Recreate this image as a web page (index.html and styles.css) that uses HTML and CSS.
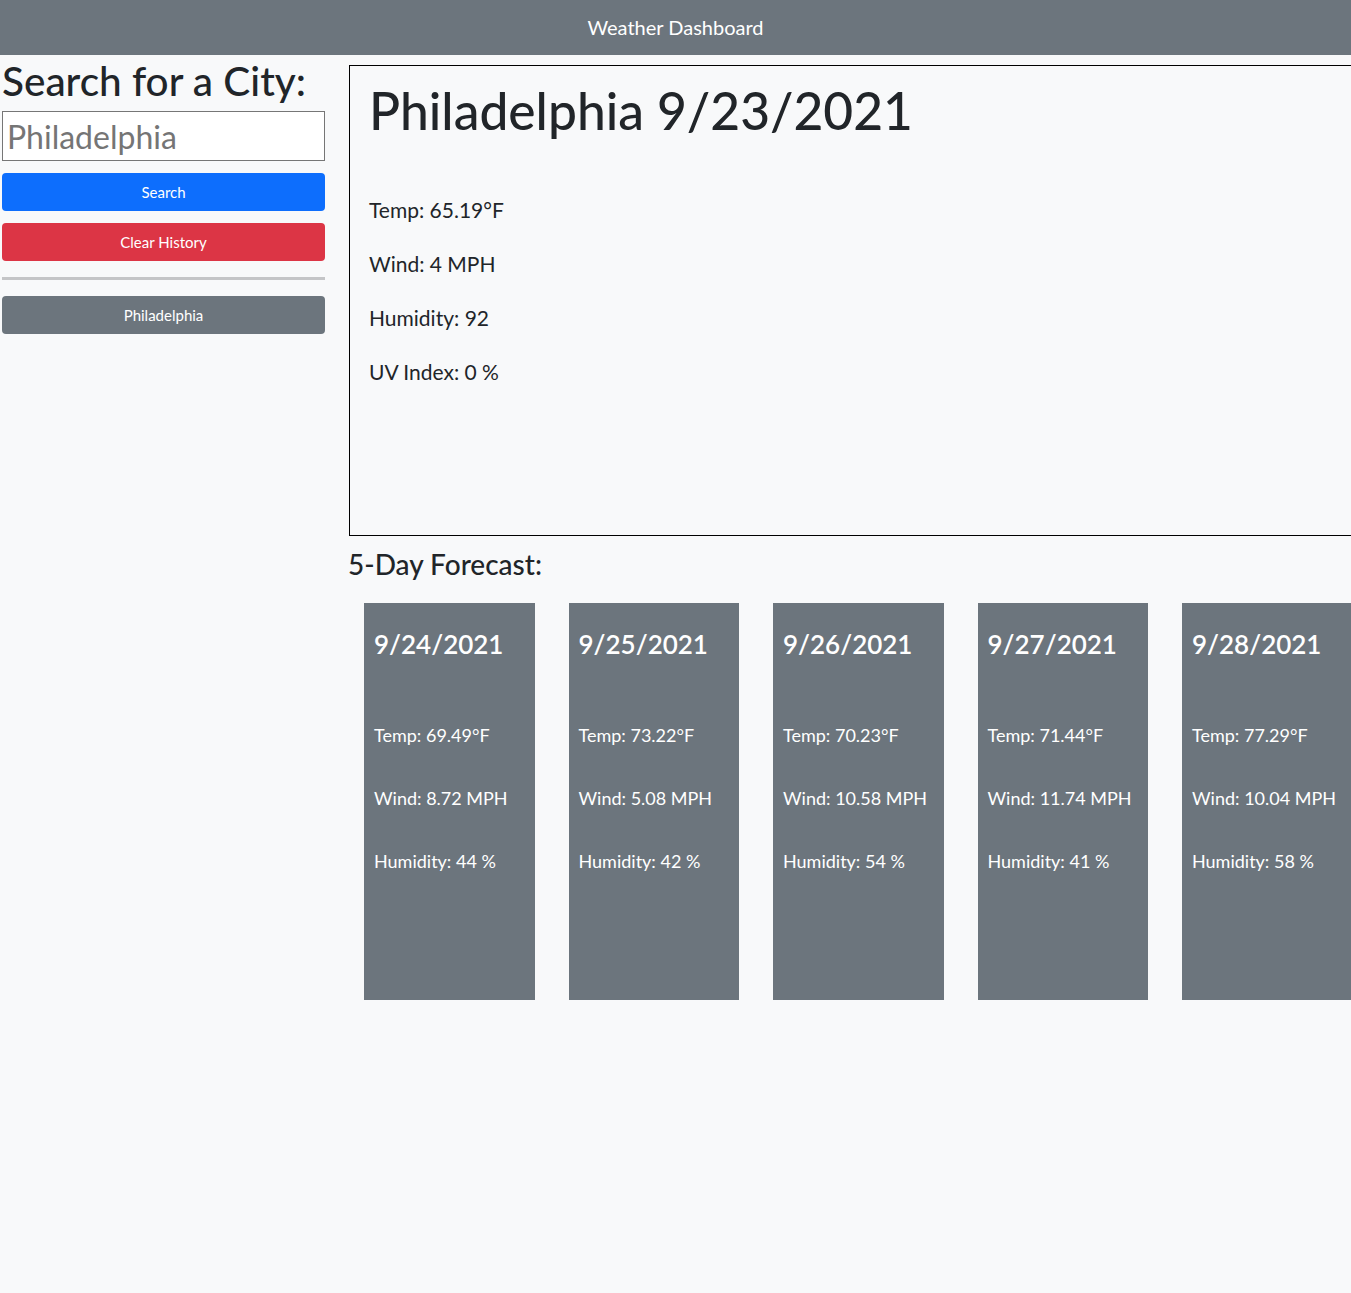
FILE: index.html
```html
<!DOCTYPE html>
<html lang="en">
<head>
<meta charset="utf-8">
<title>Weather Dashboard</title>
<link rel="stylesheet" href="styles.css">
</head>
<body>
<header class="topbar">Weather Dashboard</header>
<div class="layout">
  <aside class="sidebar">
    <h1 class="search-title">Search for a City:</h1>
    <input class="city-input" type="text" placeholder="Philadelphia">
    <button class="btn btn-blue">Search</button>
    <button class="btn btn-red">Clear History</button>
    <hr class="divider">
    <button class="btn btn-gray">Philadelphia</button>
  </aside>
  <main class="content">
    <section class="current">
      <h2 class="current-title">Philadelphia 9/23/2021</h2>
      <p class="current-line">Temp: 65.19°F</p>
      <p class="current-line">Wind: 4 MPH</p>
      <p class="current-line">Humidity: 92</p>
      <p class="current-line">UV Index: 0 %</p>
    </section>
    <h3 class="forecast-title">5-Day Forecast:</h3>
    <div class="forecast">
      <div class="day">
        <h4 class="day-date">9/24/2021</h4>
        <p class="day-line">Temp: 69.49°F</p>
        <p class="day-line">Wind: 8.72 MPH</p>
        <p class="day-line">Humidity: 44 %</p>
      </div>
      <div class="day">
        <h4 class="day-date">9/25/2021</h4>
        <p class="day-line">Temp: 73.22°F</p>
        <p class="day-line">Wind: 5.08 MPH</p>
        <p class="day-line">Humidity: 42 %</p>
      </div>
      <div class="day">
        <h4 class="day-date">9/26/2021</h4>
        <p class="day-line">Temp: 70.23°F</p>
        <p class="day-line">Wind: 10.58 MPH</p>
        <p class="day-line">Humidity: 54 %</p>
      </div>
      <div class="day">
        <h4 class="day-date">9/27/2021</h4>
        <p class="day-line">Temp: 71.44°F</p>
        <p class="day-line">Wind: 11.74 MPH</p>
        <p class="day-line">Humidity: 41 %</p>
      </div>
      <div class="day">
        <h4 class="day-date">9/28/2021</h4>
        <p class="day-line">Temp: 77.29°F</p>
        <p class="day-line">Wind: 10.04 MPH</p>
        <p class="day-line">Humidity: 58 %</p>
      </div>
    </div>
  </main>
</div>
</body>
</html>
```

FILE: styles.css
```css
html, body {
  margin: 0;
  padding: 0;
}
body {
  background: #f8f9fa;
  color: #212529;
  font-family: "Segoe UI", Lato, "Liberation Sans", sans-serif;
  overflow-x: hidden;
  min-height: 1293px;
}
.topbar {
  height: 55px;
  background: #6c757d;
  color: #fff;
  font-size: 20px;
  display: flex;
  align-items: center;
  justify-content: center;
  padding-bottom: 1px;
  box-sizing: border-box;
}
.layout {
  display: flex;
  align-items: flex-start;
}
.sidebar {
  width: 323px;
  margin-left: 2px;
  flex: none;
  display: flex;
  flex-direction: column;
}
.search-title {
  margin: 4px 0 0 0;
  font-size: 40.5px;
  font-weight: 500;
  line-height: 44px;
}
.city-input {
  box-sizing: border-box;
  margin-top: 8px;
  height: 50px;
  width: 100%;
  font-family: inherit;
  font-size: 32px;
  padding: 0 4px;
  border: 1px solid #767676;
  background: #fff;
}
.city-input::placeholder {
  color: #757575;
}
.btn {
  box-sizing: border-box;
  height: 38px;
  width: 100%;
  border: none;
  border-radius: 4px;
  color: #fff;
  font-family: inherit;
  font-size: 15px;
  margin-top: 12px;
  padding: 0;
}
.btn-blue { background: #0d6efd; }
.btn-red { background: #dc3545; }
.btn-gray { background: #6c757d; margin-top: 0; }
.divider {
  width: 100%;
  margin: 16px 0 16px;
  border: none;
  height: 3px;
  background: #c4c5c7;
}
.content {
  margin-left: 24px;
  flex: none;
  width: 1010px;
}
.current {
  box-sizing: border-box;
  margin-top: 10px;
  height: 471px;
  border: 1px solid #000;
  padding: 10px 19px;
}
.current-title {
  margin: 0 0 51px;
  font-size: 51.5px;
  font-weight: 500;
  line-height: 68px;
}
.current-line {
  margin: 0 0 24px;
  font-size: 21px;
  line-height: 30px;
}
.forecast-title {
  margin: 10px 0 21px -1px;
  font-size: 28px;
  font-weight: 500;
  line-height: 36px;
}
.forecast {
  display: flex;
  gap: 34px;
  margin-left: 15px;
}
.day {
  box-sizing: border-box;
  width: 170.5px;
  height: 397px;
  flex: none;
  background: #6c757d;
  color: #fff;
  padding: 22px 10px;
}
.day-date {
  margin: 0 0 59px;
  font-size: 26px;
  font-weight: 600;
  line-height: 38px;
}
.day-line {
  margin: 0 0 36px;
  font-size: 18px;
  line-height: 27px;
}
```
